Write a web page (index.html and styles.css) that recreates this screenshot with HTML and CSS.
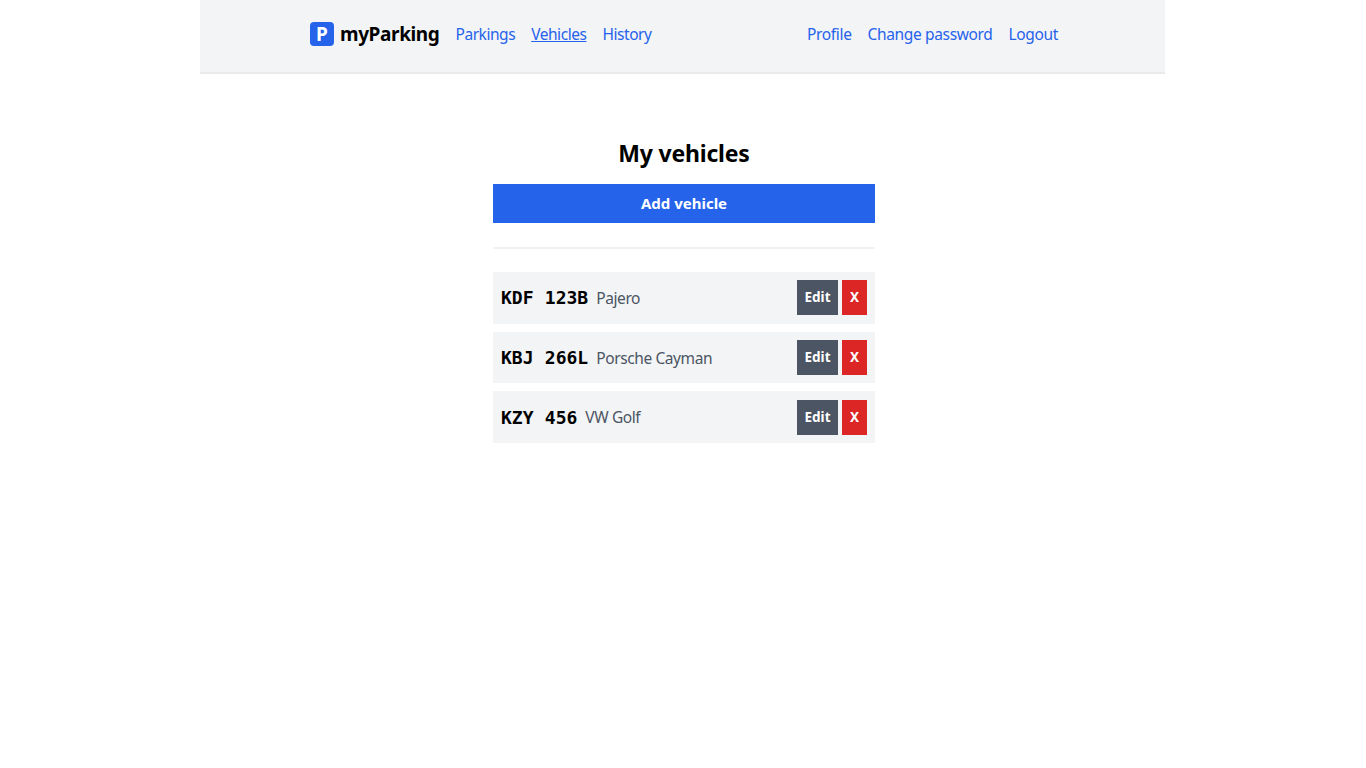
FILE: index.html
```html
<!DOCTYPE html>
<html lang="en">
<head>
<meta charset="utf-8">
<title>myParking</title>
<link rel="stylesheet" href="styles.css">
</head>
<body>
<div class="page">
  <header class="nav">
    <div class="nav-inner">
      <div class="nav-left">
        <a class="brand" href="#"><span class="brand-icon">P</span><span>myParking</span></a>
        <a class="link" href="#">Parkings</a>
        <a class="link active" href="#">Vehicles</a>
        <a class="link" href="#">History</a>
      </div>
      <div class="nav-right">
        <a class="link" href="#">Profile</a>
        <a class="link" href="#">Change password</a>
        <a class="link" href="#">Logout</a>
      </div>
    </div>
  </header>
  <main class="main">
    <h1 class="title">My vehicles</h1>
    <button class="add">Add vehicle</button>
    <hr class="rule">
    <div class="list">
      <div class="row">
        <div class="info"><span class="plate">KDF 123B</span><span class="desc">Pajero</span></div>
        <div class="actions"><button class="btn edit">Edit</button><button class="btn del">X</button></div>
      </div>
      <div class="row">
        <div class="info"><span class="plate">KBJ 266L</span><span class="desc">Porsche Cayman</span></div>
        <div class="actions"><button class="btn edit">Edit</button><button class="btn del">X</button></div>
      </div>
      <div class="row">
        <div class="info"><span class="plate">KZY 456</span><span class="desc">VW Golf</span></div>
        <div class="actions"><button class="btn edit">Edit</button><button class="btn del">X</button></div>
      </div>
    </div>
  </main>
</div>
</body>
</html>
```
FILE: styles.css
```css
* { box-sizing: border-box; }
html, body { margin: 0; padding: 0; background: #fff; }
body { font-family: "Noto Sans", "Open Sans", sans-serif; color: #000; }
.page { width: 965px; margin-left: 200px; min-height: 768px; }
.nav {
  height: 74px;
  background: #f3f4f6;
  border-bottom: 2px solid #e9eaec;
}
.nav-inner {
  height: 72px;
  padding: 0 107px 4px 110px;
  display: flex;
  align-items: center;
  justify-content: space-between;
}
.nav-left, .nav-right { display: flex; align-items: center; gap: 16px; }
.brand {
  display: flex;
  align-items: center;
  gap: 6px;
  font-size: 19px;
  font-weight: 700;
  color: #000;
  text-decoration: none;
  letter-spacing: -0.38px;
}
.brand-icon {
  width: 24px;
  height: 24px;
  background: #2563eb;
  border-radius: 4px;
  color: #fff;
  display: flex;
  align-items: center;
  justify-content: center;
  font-size: 19px;
  letter-spacing: 0;
}
.link { font-size: 15.5px; letter-spacing: -0.35px; color: #2563eb; text-decoration: none; }
.nav-left .link { letter-spacing: -0.45px; }
.link.active { text-decoration: underline; }
.main {
  width: 382px;
  padding-top: 61px;
  margin-left: 293px;
}
.title {
  margin: 0;
  height: 37px;
  line-height: 36px;
  font-size: 23px;
  letter-spacing: -0.2px;
  font-weight: 700;
  text-align: center;
}
.add {
  display: block;
  margin-top: 12px;
  width: 100%;
  height: 39.2px;
  border: 0;
  padding: 0 0 1px;
  background: #2563eb;
  color: #fff;
  font: 700 15px "Noto Sans", sans-serif;
}
.rule { border: 0; border-top: 2px solid #f1f2f4; margin: 23.8px 0 23px; }
.list { display: flex; flex-direction: column; gap: 8px; }
.row {
  height: 51.7px;
  background: #f3f4f6;
  padding: 0 8px;
  display: flex;
  align-items: center;
  justify-content: space-between;
}
.info { display: flex; align-items: center; gap: 8px; }
.plate {
  font-family: "DejaVu Sans Mono", monospace;
  font-weight: 700;
  font-size: 18px;
  white-space: pre;
  word-spacing: 0.5px;
}
.desc { font-size: 15.5px; letter-spacing: -0.4px; color: #4b5563; }
.actions { display: flex; gap: 4px; }
.btn {
  height: 35.2px;
  border: 0;
  color: #fff;
  font: 700 13.5px "Noto Sans", sans-serif;
  padding: 0 0 1px;
}
.edit { width: 41px; background: #4b5563; }
.del { width: 25px; background: #dc2626; }
```
